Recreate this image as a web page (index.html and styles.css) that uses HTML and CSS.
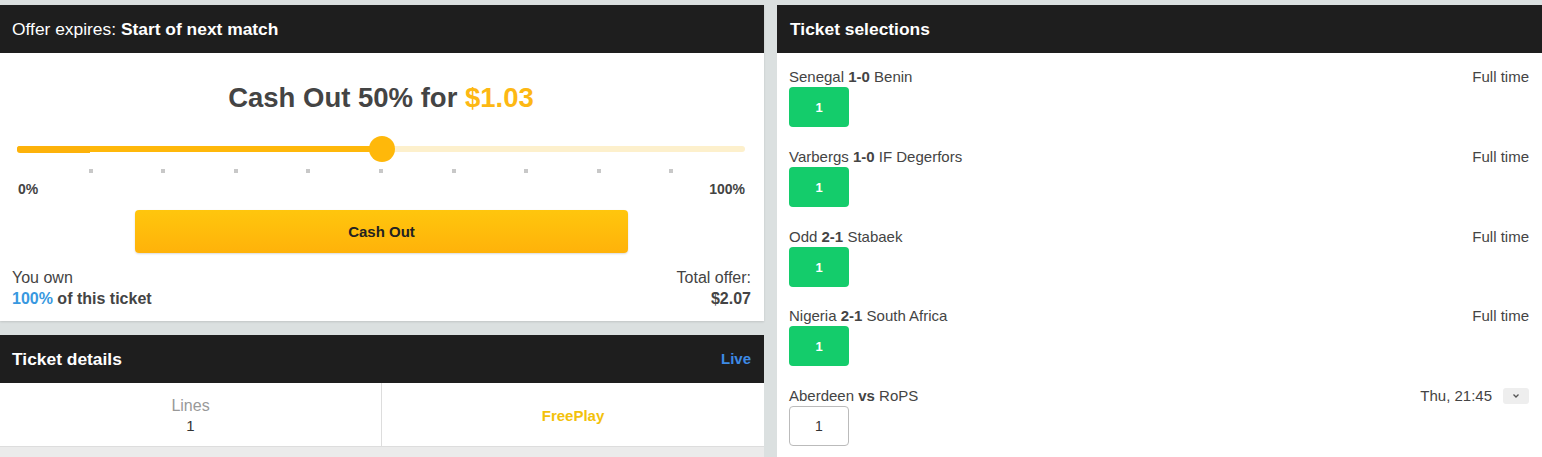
FILE: index.html
```html
<!DOCTYPE html>
<html>
<head>
<meta charset="utf-8">
<link rel="stylesheet" href="styles.css">
</head>
<body>
<div class="page">
  <div class="left">
    <section class="card offer">
      <div class="bar"><span class="light">Offer expires:</span> Start of next match</div>
      <div class="offer-body">
        <div class="title">Cash Out 50% for <span class="amount">$1.03</span></div>
        <div class="slider">
          <div class="track"></div>
          <div class="fill" style="width:50%"></div>
          <div class="minfill" style="width:10%"></div>
          <div class="thumb" style="left:50%"></div>
        </div>
        <div class="ticks">
          <i class="hide"></i><i></i><i></i><i></i><i></i><i></i><i></i><i></i><i></i><i></i><i class="hide"></i>
        </div>
        <div class="range"><span>0%</span><span>100%</span></div>
        <button class="cashout">Cash Out</button>
      </div>
      <div class="own">
        <div>
          <div>You own</div>
          <div class="b"><span class="blue">100%</span> of this ticket</div>
        </div>
        <div class="right">
          <div>Total offer:</div>
          <div class="b">$2.07</div>
        </div>
      </div>
    </section>
    <section class="card details">
      <div class="bar split"><span>Ticket details</span><span class="live">Live</span></div>
      <div class="cells">
        <div class="cell"><div class="lbl">Lines</div><div class="val">1</div></div>
        <div class="cell"><div class="free">FreePlay</div></div>
      </div>
    </section>
    <div class="rest"></div>
  </div>
  <section class="card selections">
    <div class="bar sel">Ticket selections</div>
    <div class="row">
      <div class="line"><span>Senegal <b>1-0</b> Benin</span><span>Full time</span></div>
      <div class="pick win">1</div>
    </div>
    <div class="row">
      <div class="line"><span>Varbergs <b>1-0</b> IF Degerfors</span><span>Full time</span></div>
      <div class="pick win">1</div>
    </div>
    <div class="row">
      <div class="line"><span>Odd <b>2-1</b> Stabaek</span><span>Full time</span></div>
      <div class="pick win">1</div>
    </div>
    <div class="row">
      <div class="line"><span>Nigeria <b>2-1</b> South Africa</span><span>Full time</span></div>
      <div class="pick win">1</div>
    </div>
    <div class="row">
      <div class="line"><span>Aberdeen <b>vs</b> RoPS</span><span class="when">Thu, 21:45 <span class="chev"><svg width="8" height="6" viewBox="0 0 8 6"><path d="M1.5 1.5 L4 4 L6.5 1.5" fill="none" stroke="#555" stroke-width="1.3"/></svg></span></span></div>
      <div class="pick open">1</div>
    </div>
  </section>
</div>
</body>
</html>
```
FILE: styles.css
```css
* { box-sizing: border-box; }
html, body { margin: 0; padding: 0; }
body {
  background: #dbe0e0;
  font-family: "Liberation Sans", Arial, sans-serif;
  color: #444;
  height: 457px;
  overflow: hidden;
}
.page {
  display: flex;
  padding-top: 5px;
  gap: 13px;
  height: 457px;
}
.left {
  width: 764px;
  display: flex;
  flex-direction: column;
}
.card {
  background: #fff;
  box-shadow: 0 1px 2px rgba(0,0,0,0.12);
}
.bar {
  background: #1e1e1e;
  color: #fff;
  height: 48px;
  line-height: 48px;
  padding: 0 12px;
  font-size: 17.4px;
  font-weight: bold;
}
.bar .light { font-weight: normal; }
.bar.split { display: flex; justify-content: space-between; padding-right: 13px; }
.bar .live { color: #3d8ae6; font-size: 15px; }
.offer-body {
  padding: 30px 19px 0 17px;
}
.title {
  text-align: center;
  font-size: 27.5px;
  line-height: 30px;
  font-weight: bold;
  color: #444;
}
.title .amount { color: #fdb813; }
.slider {
  position: relative;
  height: 26px;
  margin-top: 23px;
}
.track, .fill, .minfill {
  position: absolute;
  left: 0;
  top: 10px;
  height: 6px;
  border-radius: 3px;
}
.track { right: 0; background: #fdf0cc; }
.fill { background: #ffb80a; }
.minfill { background: #fdb20a; top: 10px; height: 7px; border-radius: 3px 0 0 3px; }
.thumb {
  position: absolute;
  top: 0;
  width: 26px;
  height: 26px;
  margin-left: -12px;
  border-radius: 50%;
  background: #ffb80a;
}
.ticks {
  display: flex;
  justify-content: space-between;
  margin-top: 7px;
  height: 4px;
  margin-left: -1px;
  margin-right: -1px;
}
.ticks i {
  width: 4px;
  height: 4px;
  background: #c8c8c8;
}
.ticks i.hide { background: transparent; }
.range {
  display: flex;
  justify-content: space-between;
  margin-top: 8px;
  font-size: 14px;
  font-weight: bold;
  line-height: 16px;
  color: #444;
  padding-left: 1px;
}
.cashout {
  display: block;
  width: 493px;
  height: 43px;
  margin: 13px auto 0;
  margin-left: 118px;
  border: none;
  border-radius: 4px;
  background: linear-gradient(#ffc60d, #ffb20a);
  box-shadow: 0 1px 2px rgba(0,0,0,0.15);
  font-family: "Liberation Sans", Arial, sans-serif;
  font-size: 15px;
  font-weight: bold;
  color: #222;
}
.own {
  display: flex;
  justify-content: space-between;
  padding: 14px 13px 12px 12px;
  font-size: 16px;
  line-height: 21px;
  color: #444;
}
.own .b { font-weight: bold; }
.own .blue { color: #3898e0; }
.own .right { text-align: right; }
.details { margin-top: 14px; box-shadow: none; }
.cells {
  display: flex;
  height: 64px;
  border-bottom: 1px solid #ddd;
}
.cell {
  flex: 1;
  display: flex;
  flex-direction: column;
  align-items: center;
  justify-content: center;
  font-size: 15px;
  line-height: 20px;
  padding-top: 2px;
}
.cell:first-child { border-right: 1px solid #ddd; flex: 0 0 382px; padding-top: 3px; }
.cell .lbl { color: #999; font-size: 16px; }
.cell .val { color: #333; }
.cell .free { color: #f3c10b; font-weight: bold; }
.rest { flex: 1; background: #ebebeb; }
.selections {
  flex: 1;
  box-shadow: none;
}
.bar.sel { padding-left: 13px; }
.row {
  padding: 15px 13px 6px 12px;
}
.row:nth-child(4) { padding-bottom: 5px; }
.line {
  display: flex;
  justify-content: space-between;
  align-items: center;
  font-size: 15px;
  line-height: 18px;
  color: #444;
  height: 18px;
}
.line b { font-weight: bold; }
.when { display: flex; align-items: center; gap: 11px; }
.chev {
  display: inline-flex;
  align-items: center;
  justify-content: center;
  width: 26px;
  height: 16px;
  background: #eee;
  border-radius: 3px;
}
.pick {
  margin-top: 1px;
  width: 60px;
  height: 40px;
  border-radius: 4px;
  display: flex;
  align-items: center;
  justify-content: center;
  font-size: 13px;
  font-weight: bold;
}
.pick.win { background: #14cc6b; color: #fff; }
.pick.open { background: #fff; border: 1px solid #bbb; color: #333; font-weight: normal; font-size: 14px; }
```
